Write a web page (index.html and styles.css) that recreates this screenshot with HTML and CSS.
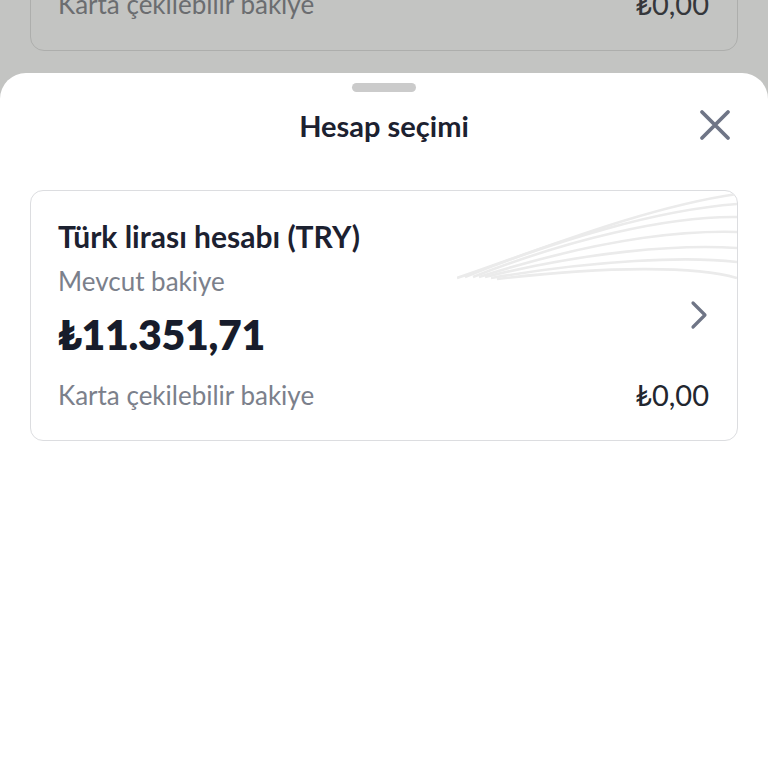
FILE: index.html
```html
<!DOCTYPE html>
<html lang="tr">
<head>
<meta charset="utf-8">
<link rel="stylesheet" href="styles.css">
</head>
<body>
<div class="backdrop">
  <div class="bg-card">
    <span class="bg-label">Karta çekilebilir bakiye</span>
    <span class="bg-value">₺0,00</span>
  </div>
</div>
<div class="sheet">
  <div class="handle"></div>
  <div class="header">
    <h1 class="title">Hesap seçimi</h1>
    <button class="close" aria-label="Kapat">
      <svg width="34" height="34" viewBox="0 0 34 34"><path d="M4 4 L30 30 M30 4 L4 30" stroke="#6f7586" stroke-width="3.8" stroke-linecap="round" fill="none"/></svg>
    </button>
  </div>
  <div class="account">
    <svg class="waves" width="280" height="90" viewBox="0 0 280 90" preserveAspectRatio="none">
      <g fill="none" stroke="#ebebeb" stroke-width="2.6">
        <path d="M0 86 C 90 55, 190 15, 280 2"/>
        <path d="M8 85 C 100 48, 200 18, 280 12"/>
        <path d="M16 85 C 110 48, 210 24, 280 25"/>
        <path d="M22 85 C 120 54, 210 38, 280 40"/>
        <path d="M28 85 C 130 60, 220 52, 280 56"/>
        <path d="M34 86 C 140 68, 230 64, 280 70"/>
        <path d="M40 87 C 150 74, 240 74, 280 86"/>
      </g>
    </svg>
    <div class="acc-name">Türk lirası hesabı (TRY)</div>
    <div class="acc-label first">Mevcut bakiye</div>
    <div class="acc-row">
      <div class="acc-balance">₺11.351,71</div>
      <svg class="chevron" width="20" height="30" viewBox="0 0 20 30"><path d="M4 3 L16 15 L4 27" stroke="#6f7586" stroke-width="3.2" stroke-linecap="round" stroke-linejoin="round" fill="none"/></svg>
    </div>
    <div class="acc-foot">
      <span class="acc-label">Karta çekilebilir bakiye</span>
      <span class="acc-value">₺0,00</span>
    </div>
  </div>
</div>
</body>
</html>
```
FILE: styles.css
```css
* { box-sizing: border-box; }
html, body { margin: 0; padding: 0; }
body {
  width: 768px;
  height: 768px;
  overflow: hidden;
  background: #c3c4c2;
  font-family: Lato, "Noto Sans", sans-serif;
  display: flex;
  flex-direction: column;
}
.backdrop {
  height: 73px;
  flex: none;
  padding: 0 30px;
}
.bg-card {
  position: relative;
  top: -30px;
  height: 81px;
  border: 1.5px solid #adaeac;
  border-radius: 14px;
  padding: 18px 28px 0 27px;
  display: flex;
  justify-content: space-between;
  align-items: flex-start;
  color: #6b6d70;
  font-size: 26px;
  line-height: 30px;
}
.bg-value { color: #35373b; font-size: 29px; }
.sheet {
  flex: 1;
  background: #fff;
  border-radius: 26px 26px 0 0;
  padding: 10px 30px 0 30px;
  display: flex;
  flex-direction: column;
}
.handle {
  width: 64px;
  height: 9px;
  border-radius: 5px;
  background: #cbcbcb;
  align-self: center;
}
.header {
  position: relative;
  height: 98px;
  display: flex;
  align-items: flex-start;
  justify-content: center;
}
.title {
  margin: 16px 0 0 0;
  font-size: 29px;
  line-height: 36px;
  font-weight: 700;
  color: #1c2130;
}
.close {
  position: absolute;
  right: 6px;
  top: 16px;
  background: none;
  border: 0;
  padding: 0;
  width: 34px;
  height: 34px;
}
.account {
  position: relative;
  border: 1.5px solid #dcdde0;
  border-radius: 13px;
  height: 251px;
  padding: 27px 28px 0 27px;
  overflow: hidden;
}
.waves {
  position: absolute;
  right: 0;
  top: 1px;
}
.acc-name {
  position: relative;
  font-size: 30px;
  font-weight: 700;
  color: #1c2130;
  line-height: 36px;
}
.acc-label {
  font-size: 26px;
  color: #7b808b;
  line-height: 30px;
}
.acc-label.first { margin-top: 12px; }
.acc-row {
  display: flex;
  justify-content: space-between;
  align-items: flex-start;
  margin-top: 15px;
}
.acc-balance {
  font-size: 41px;
  font-weight: 800;
  color: #171c2b;
  line-height: 48px;
  letter-spacing: -0.3px;
}
.chevron { margin-top: -11px; }
.acc-foot {
  display: flex;
  justify-content: space-between;
  align-items: center;
  margin-top: 21px;
}
.acc-value {
  font-size: 29px;
  line-height: 30px;
  color: #22262f;
}
```
